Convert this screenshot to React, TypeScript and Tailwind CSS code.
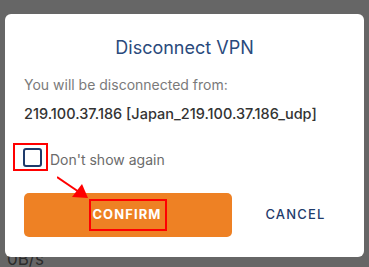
export default function App() {
    return (
        <div className="relative h-[267px] w-[369px] overflow-hidden bg-[#666666] font-['Inter','Liberation_Sans',sans-serif]">
            {/* Dialog */}
            <div className="relative z-10 ml-[5px] mt-[14px] flex w-[359px] flex-col rounded-[6px] bg-white pl-[19px] pr-[5px] pb-[20px] pt-[22px]">
                <h2 className="pr-[14px] text-center text-[18px] leading-[24px] font-normal text-[#2a4a7c]">Disconnect VPN</h2>
                <p className="mt-[15px] text-[14px] leading-[20px] text-[#7a7a7a]">You will be disconnected from:</p>
                <p className="mt-[9px] text-[14.5px] leading-[20px] font-medium text-[#333333]">219.100.37.186 [Japan_219.100.37.186_udp]</p>

                <div className="relative mt-[19px] flex h-[28px] items-start">
                    <span className="absolute -left-[11px] top-0 h-[28px] w-[35px] border-2 border-[#ff0000]" />
                    <span className="mt-[5px] -ml-[1px] block h-[19px] w-[19px] rounded-[3px] border-2 border-[#1f3b6b]" />
                    <span className="ml-[8px] mt-[7px] text-[14px] leading-[20px] text-[#6b6b6b]">Don't show again</span>
                </div>

                <div className="relative mt-[22px] flex">
                    <button className="flex h-[44px] w-[208px] shrink-0 items-center justify-center rounded-[5px] bg-[#ee8124]">
                        <span className="flex h-[32px] items-center border-2 border-[#ff0000] pl-[1px] pr-[3px] text-[13px] font-bold tracking-[1.1px] text-white">CONFIRM</span>
                    </button>
                    <button className="flex h-[44px] w-[127px] shrink-0 items-center justify-center text-[13px] font-medium tracking-[1.2px] text-[#1f3b6b]">CANCEL</button>
                    <svg className="absolute left-[33px] -top-[17px]" width="40" height="26" viewBox="0 0 40 26">
                        <line x1="0" y1="1" x2="22" y2="16" stroke="#ff0000" strokeWidth="2" />
                        <polygon points="15,21 25,8 31,22" fill="#ff0000" />
                    </svg>
                </div>
            </div>
            <div className="-mt-[8px] ml-[7px] text-[17px] leading-[20px] text-[#2b2b2b]">0B/s</div>
        </div>
    );
}
